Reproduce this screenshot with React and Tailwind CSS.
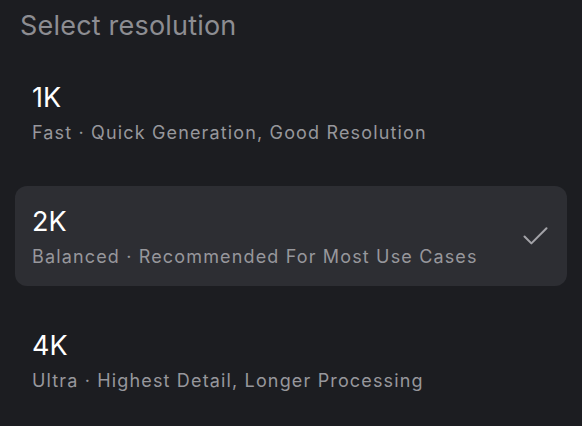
import { Check } from 'lucide-react'

const OPTIONS = [
  { id: '1k', label: '1K', desc: 'Fast · Quick Generation, Good Resolution' },
  { id: '2k', label: '2K', desc: 'Balanced · Recommended For Most Use Cases' },
  { id: '4k', label: '4K', desc: 'Ultra · Highest Detail, Longer Processing' }
]

export default function App() {
  const selected = '2k'

  return (
    <div
      className="flex h-[426px] w-[582px] flex-col bg-[#1c1d21] px-[15px] pt-[10px]"
      style={{ fontFamily: 'Inter, "Noto Sans", sans-serif' }}
    >
      <h2 className="px-[5px] text-[27px] leading-[32px] tracking-[0.2px] text-[#8d8d92]">Select resolution</h2>
      <div className="mt-[20px] flex flex-col gap-[24px]">
        {OPTIONS.map((option) => {
          const isSelected = option.id === selected
          return (
            <div
              key={option.id}
              className={`flex h-[100px] items-center justify-between rounded-[12px] pl-[17px] pr-[15px] ${
                isSelected ? 'bg-[#2d2e33]' : ''
              }`}
            >
              <div className="flex flex-col gap-[7px] pt-[2px]">
                <span className="text-[27px] leading-[32px] text-white">{option.label}</span>
                <span className="text-[18px] leading-[24px] tracking-[1.15px] text-[#97979c]">
                  {option.desc}
                </span>
              </div>
              {isSelected && <Check className="size-[33px] text-[#a3a3a8]" strokeWidth={1.5} />}
            </div>
          )
        })}
      </div>
    </div>
  )
}
